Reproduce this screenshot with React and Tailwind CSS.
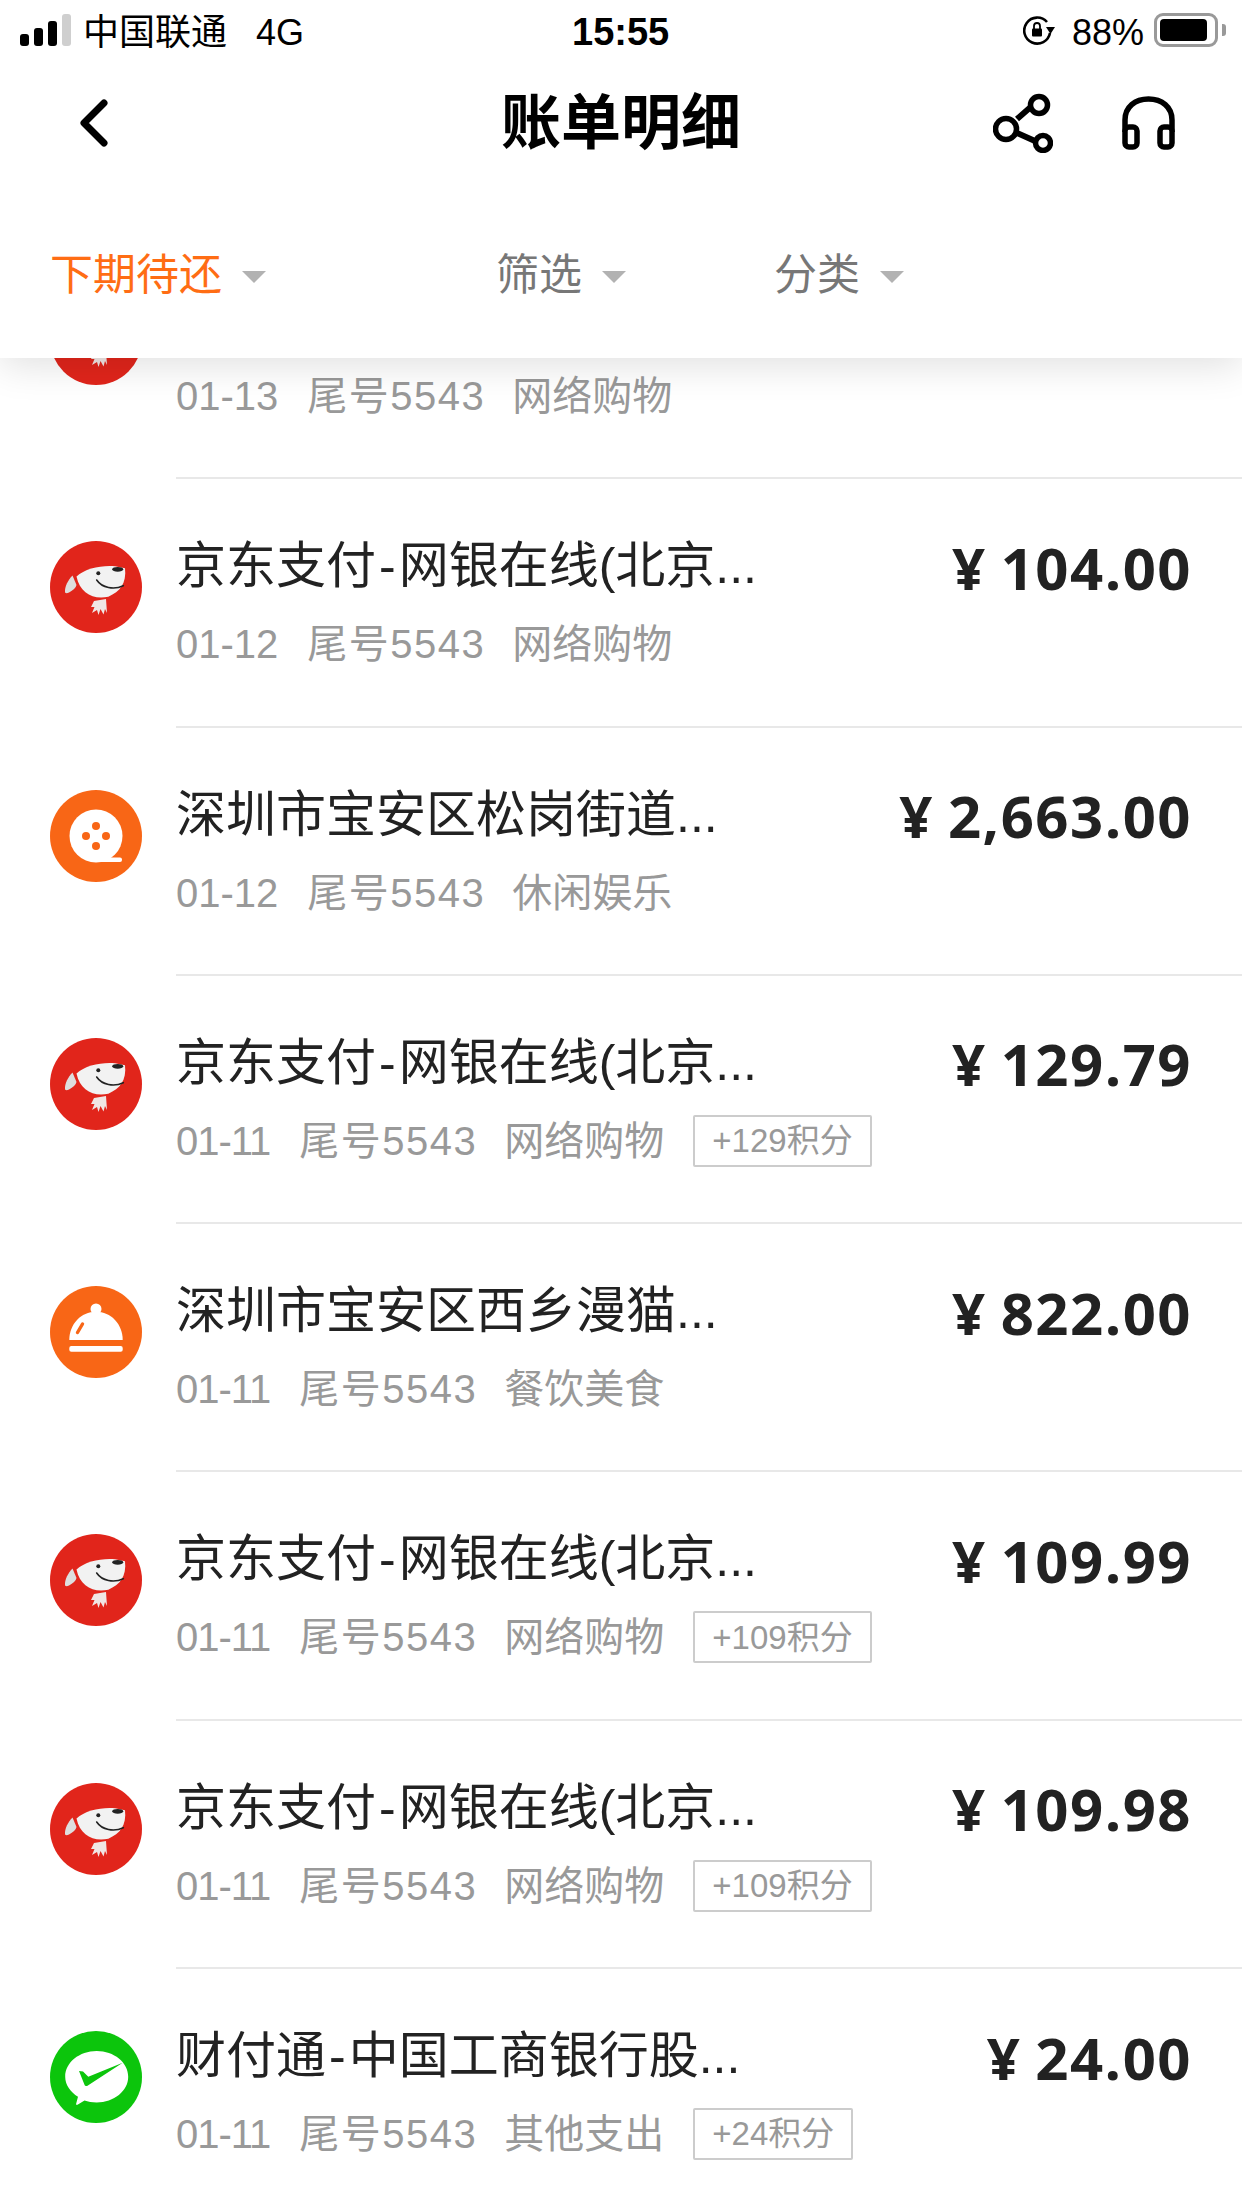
const rows = [
  { title: "", date: "01-13", cat: "网络购物", icon: "jd" },
  { title: "京东支付-网银在线(北京...", date: "01-12", cat: "网络购物", amount: "104.00", icon: "jd" },
  { title: "深圳市宝安区松岗街道...", date: "01-12", cat: "休闲娱乐", amount: "2,663.00", icon: "film" },
  { title: "京东支付-网银在线(北京...", date: "01-11", cat: "网络购物", amount: "129.79", points: "+129积分", icon: "jd" },
  { title: "深圳市宝安区西乡漫猫...", date: "01-11", cat: "餐饮美食", amount: "822.00", icon: "food" },
  { title: "京东支付-网银在线(北京...", date: "01-11", cat: "网络购物", amount: "109.99", points: "+109积分", icon: "jd" },
  { title: "京东支付-网银在线(北京...", date: "01-11", cat: "网络购物", amount: "109.98", points: "+109积分", icon: "jd" },
  { title: "财付通-中国工商银行股...", date: "01-11", cat: "其他支出", amount: "24.00", points: "+24积分", icon: "pay" },
];

function JdIcon() {
  return (
    <svg viewBox="0 0 92 92" className="w-[92px] h-[92px]">
      <circle cx="46" cy="46" r="46" fill="#e1251b" />
      <path d="M22.5 34.5C18 39 14.5 46 15 51C15.2 52.5 17 52.5 19 51.5C23 49.5 26 46.5 26.5 44Z" fill="#dedede" />
      <path d="M26.5 35.5C35 27.3 51.7 24 65 25.2L75 27.3C76.7 42.3 70 50.7 58.3 55.7C43.3 59 30 52.3 26.5 35.5Z" fill="#f2f2f2" />
      <ellipse cx="67.7" cy="28.3" rx="5.5" ry="2.4" fill="#222" />
      <circle cx="48.3" cy="32.3" r="2" fill="#222" />
      <path d="M46.7 39C52 47 64 49 73.3 44.7" fill="none" stroke="#222" strokeWidth="1.6" strokeLinecap="round" />
      <path d="M44 60L41 66L44.5 66L42 72L47 69L48.5 74L50.5 68L53.5 73.5L55 68L57 72L56 58Z" fill="#f0e6e4" />
    </svg>
  );
}

function FilmIcon() {
  return (
    <svg viewBox="0 0 92 92" className="w-[92px] h-[92px]">
      <circle cx="46" cy="46" r="46" fill="#f86616" />
      <circle cx="46" cy="46" r="26.5" fill="#fff" />
      <rect x="46" y="67.6" width="26" height="4.4" rx="2" fill="#fff" />
      <circle cx="46" cy="36" r="4" fill="#f86616" />
      <circle cx="36" cy="46" r="4" fill="#f86616" />
      <circle cx="56" cy="46" r="4" fill="#f86616" />
      <circle cx="46" cy="56" r="4" fill="#f86616" />
    </svg>
  );
}

function FoodIcon() {
  return (
    <svg viewBox="0 0 92 92" className="w-[92px] h-[92px]">
      <circle cx="46" cy="46" r="46" fill="#f86616" />
      <circle cx="46" cy="23" r="5.5" fill="#fff" />
      <path d="M19.3 54C19.3 38 31 25.7 46 25.7S72.7 38 72.7 54Z" fill="#fff" />
      <rect x="19.3" y="60" width="53.4" height="5.7" rx="2" fill="#fff" />
      <path d="M27.5 46.5L32.5 38" stroke="#f86616" strokeWidth="3.4" strokeLinecap="round" />
    </svg>
  );
}

function PayIcon() {
  return (
    <svg viewBox="0 0 92 92" className="w-[92px] h-[92px]">
      <circle cx="46" cy="46" r="46" fill="#0cc50c" />
      <path d="M46.7 20C64 20 78.2 31.5 78.2 45.7S64 71.4 46.7 71.4C42 71.4 38 70.6 34.5 69.4L27.5 73.8C26.5 74.3 25.8 73.5 26.2 72.6L28 65.7C20.5 61 15.2 54 15.2 45.7C15.2 31.5 29.4 20 46.7 20Z" fill="#fff" />
      <path d="M29 40L33 40.5L38.3 45.7L72.7 31.7L37.5 54.8C36.5 55.4 35 55 34.6 54Z" fill="#0cc50c" />
    </svg>
  );
}

const icons = { jd: JdIcon, film: FilmIcon, food: FoodIcon, pay: PayIcon };

function Caret() {
  return <span className="w-0 h-0 border-x-[12px] border-x-transparent border-t-[12px] border-t-[#b2b2b2] ml-[20px] mt-[3px]" />;
}

function StatusBar() {
  return (
    <div className="flex items-center h-[60px] pl-[20px] pr-[16px] relative text-[36px] text-black">
      <div className="flex items-end gap-[5px] h-[32px]">
        <span className="w-[9px] h-[12px] rounded-[3px] bg-black" />
        <span className="w-[9px] h-[18px] rounded-[3px] bg-black" />
        <span className="w-[9px] h-[25px] rounded-[3px] bg-black" />
        <span className="w-[9px] h-[32px] rounded-[3px] bg-[#cfcfcf]" />
      </div>
      <span className="ml-[12px] mt-[5px]">中国联通</span>
      <span className="ml-[29px] mt-[5px]">4G</span>
      <span className="absolute left-[572px] mt-[5px] text-[38px] font-bold">15:55</span>
      <div className="ml-auto flex items-center">
        <svg viewBox="0 0 32 30" className="w-[32px] h-[30px]">
          <path d="M24 7A13 13 0 1 0 27 18" fill="none" stroke="#000" strokeWidth="2.6" />
          <path d="M23 12H32L27.5 19Z" fill="#000" />
          <rect x="9" y="13.5" width="10" height="8" rx="1" fill="#000" />
          <path d="M11 14V11A3 3 0 0 1 17 11V14" fill="none" stroke="#000" strokeWidth="1.8" />
        </svg>
        <span className="ml-[17px] mt-[5px]">88%</span>
        <div className="ml-[10px] w-[64px] h-[34px] rounded-[9px] border-[3px] border-[#999] p-[3px]">
          <div className="w-[47px] h-[22px] rounded-[4px] bg-black" />
        </div>
        <span className="ml-[4px] w-[4px] h-[12px] rounded-r-[3px] bg-[#999]" />
      </div>
    </div>
  );
}

function NavBar() {
  return (
    <div className="flex items-center justify-between h-[126px] pl-[79px] pr-[67px] relative">
      <svg viewBox="0 0 29 48" className="w-[29px] h-[48px]">
        <path d="M25 4L5 24L25 44" fill="none" stroke="#000" strokeWidth="7" strokeLinecap="round" strokeLinejoin="round" />
      </svg>
      <div className="absolute inset-x-0 mt-[2px] text-center text-[60px] leading-[70px] font-bold text-black pointer-events-none">账单明细</div>
      <div className="flex items-center gap-[69px]">
        <svg viewBox="0 0 60 60" className="w-[60px] h-[60px]">
          <path d="M24 26L40 12M24 40L42 48" stroke="#000" strokeWidth="6" />
          <circle cx="13" cy="36" r="10.5" fill="#fff" stroke="#000" strokeWidth="5.5" />
          <circle cx="46" cy="12" r="8.5" fill="#fff" stroke="#000" strokeWidth="5.5" />
          <circle cx="50" cy="50" r="7.5" fill="#fff" stroke="#000" strokeWidth="5.5" />
        </svg>
        <svg viewBox="0 0 53 54" className="w-[53px] h-[54px]">
          <path d="M3 36V24C3 11 13 3 26.5 3S50 11 50 24V36" fill="none" stroke="#000" strokeWidth="5.5" />
          <rect x="3" y="31" width="12" height="20" rx="4" fill="#fff" stroke="#000" strokeWidth="5.5" />
          <rect x="38" y="31" width="12" height="20" rx="4" fill="#fff" stroke="#000" strokeWidth="5.5" />
        </svg>
      </div>
    </div>
  );
}

function FilterBar() {
  return (
    <div className="flex items-center h-[172px] pl-[50px] pt-[6px] text-[43px] text-[#777]">
      <div className="flex items-center w-[446px] text-[#ff6d14]">
        下期待还
        <Caret />
      </div>
      <div className="flex items-center w-[278px]">
        筛选
        <Caret />
      </div>
      <div className="flex items-center">
        分类
        <Caret />
      </div>
    </div>
  );
}

function Title({ text }) {
  // the hyphen is wider in the original font
  const [head, tail] = text.split("-");
  return (
    <div className="text-[50px] leading-[60px] h-[60px] mt-[57px] text-[#222]">
      {head}
      {tail && <span className="mx-[3px]">-</span>}
      {tail}
    </div>
  );
}

function Row({ row, first }) {
  const Icon = icons[row.icon];
  return (
    <div className={`flex h-[248.3px] pl-[50px] ${first ? "-mt-[127px]" : ""}`}>
      <div className="pt-[62px] shrink-0">
        <Icon />
      </div>
      <div className="flex-1 ml-[34px] pr-[50px] flex justify-between border-b-2 border-[#e8e8e8]">
        <div>
          <Title text={row.title} />
          <div className="flex items-center mt-[18px] h-[60px] text-[40px] text-[#999] whitespace-nowrap">
            <span className={row.date === "01-11" ? "tracking-[-1px]" : ""}>{row.date}</span>
            <span className="ml-[29px] tracking-[1.5px]">尾号5543</span>
            <span className="ml-[27px]">{row.cat}</span>
            {row.points && (
              <span className="ml-[29px] h-[52px] px-[17px] flex items-center text-[33px] border-2 border-[#ccc] rounded-[2px]">{row.points}</span>
            )}
          </div>
        </div>
        {row.amount && (
          <div className="mt-[53px] h-[70px] flex items-center font-['Open_Sans',sans-serif] text-[58px] font-bold tracking-[1.5px] text-[#222] whitespace-nowrap">
            <span className="mr-[14px]">¥</span>
            {row.amount}
          </div>
        )}
      </div>
    </div>
  );
}

export default function App() {
  return (
    <div className="w-[1242px] h-[2208px] overflow-hidden bg-white flex flex-col font-['Liberation_Sans','Noto_Sans_CJK_SC',sans-serif]">
      <header className="relative z-10 bg-white h-[358px] shrink-0 shadow-[0_8px_36px_rgba(0,0,0,0.12)]">
        <StatusBar />
        <NavBar />
        <FilterBar />
      </header>
      <div className="flex-1 overflow-hidden">
        {rows.map((row, i) => (
          <Row key={i} row={row} first={i === 0} />
        ))}
      </div>
    </div>
  );
}
